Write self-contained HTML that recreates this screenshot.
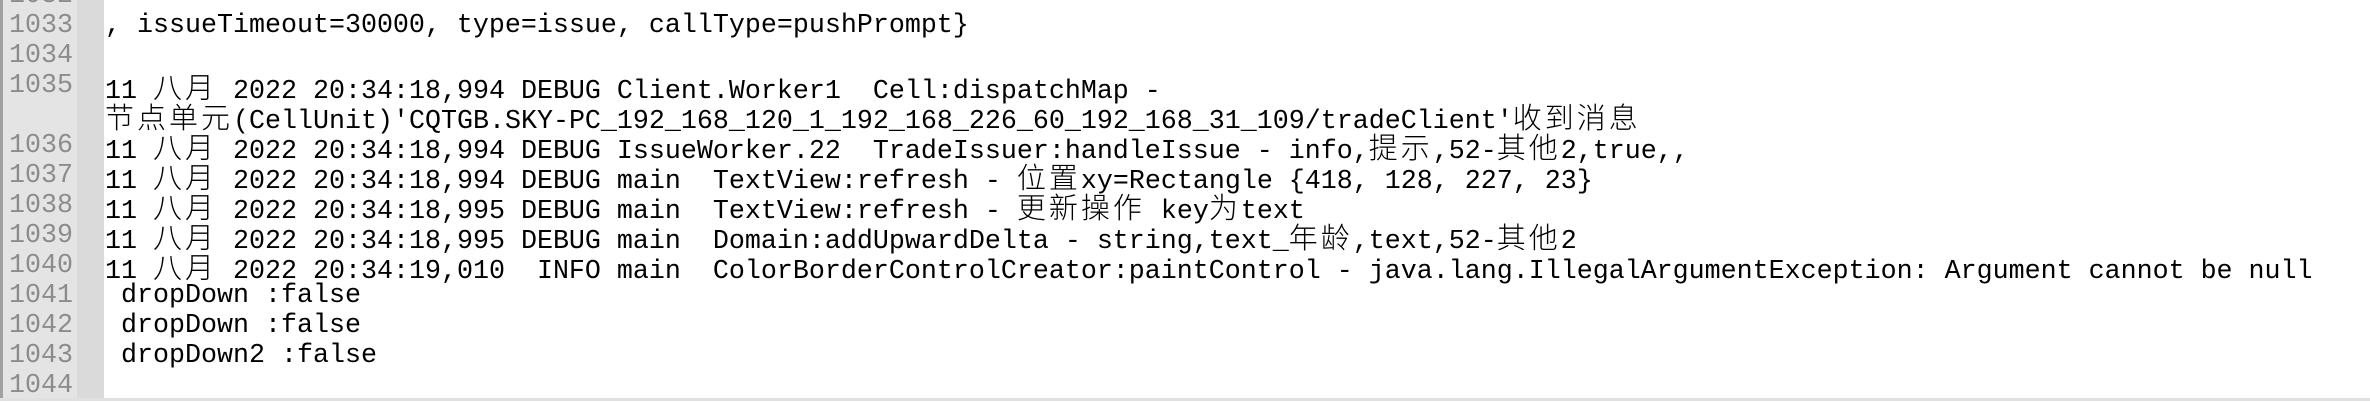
<!DOCTYPE html>
<html><head><meta charset="utf-8"><style>
html,body{margin:0;padding:0;width:2370px;height:402px;overflow:hidden;background:#fff;position:relative}
.gut{position:absolute;left:0;top:0;width:104px;height:399px;background:#e4e4e4}
.gut2{position:absolute;left:77px;top:0;width:27px;height:399px;background:#dadada}
.lb{position:absolute;left:0;top:0;width:3px;height:399px;background:#a0a0a0}
.bb{position:absolute;left:0;top:398px;width:2370px;height:3px;background:#e0e0e0}
.r{position:absolute;height:30px;line-height:30px;font-family:"Liberation Mono","Noto Sans CJK SC",monospace;font-size:26.67px;white-space:pre}
.n{left:9px;color:#8c8c8c}
.t{left:105px;color:#000}
.c{font-family:"Noto Sans CJK SC",sans-serif;font-size:29px;letter-spacing:3px;font-weight:300}
</style></head><body>
<div class="gut"></div><div class="gut2"></div><div class="lb"></div><div class="bb"></div>
<div class="r n" style="top:-19px">1032</div>
<div class="r n" style="top:11px">1033</div>
<div class="r n" style="top:41px">1034</div>
<div class="r n" style="top:71px">1035</div>
<div class="r n" style="top:131px">1036</div>
<div class="r n" style="top:161px">1037</div>
<div class="r n" style="top:191px">1038</div>
<div class="r n" style="top:221px">1039</div>
<div class="r n" style="top:251px">1040</div>
<div class="r n" style="top:281px">1041</div>
<div class="r n" style="top:311px">1042</div>
<div class="r n" style="top:341px">1043</div>
<div class="r n" style="top:371px">1044</div>
<div class="r t" style="top:11px">, issueTimeout=30000, type=issue, callType=pushPrompt}</div>
<div class="r t" style="top:71px">11 <span class="c">八月</span> 2022 20:34:18,994 DEBUG Client.Worker1  Cell:dispatchMap - </div>
<div class="r t" style="top:101px"><span class="c">节点单元</span>(CellUnit)'CQTGB.SKY-PC_192_168_120_1_192_168_226_60_192_168_31_109/tradeClient'<span class="c">收到消息</span></div>
<div class="r t" style="top:131px">11 <span class="c">八月</span> 2022 20:34:18,994 DEBUG IssueWorker.22  TradeIssuer:handleIssue - info,<span class="c">提示</span>,52-<span class="c">其他</span>2,true,,</div>
<div class="r t" style="top:161px">11 <span class="c">八月</span> 2022 20:34:18,994 DEBUG main  TextView:refresh - <span class="c">位置</span>xy=Rectangle {418, 128, 227, 23}</div>
<div class="r t" style="top:191px">11 <span class="c">八月</span> 2022 20:34:18,995 DEBUG main  TextView:refresh - <span class="c">更新操作</span> key<span class="c">为</span>text</div>
<div class="r t" style="top:221px">11 <span class="c">八月</span> 2022 20:34:18,995 DEBUG main  Domain:addUpwardDelta - string,text_<span class="c">年龄</span>,text,52-<span class="c">其他</span>2</div>
<div class="r t" style="top:251px">11 <span class="c">八月</span> 2022 20:34:19,010  INFO main  ColorBorderControlCreator:paintControl - java.lang.IllegalArgumentException: Argument cannot be null</div>
<div class="r t" style="top:281px"> dropDown :false</div>
<div class="r t" style="top:311px"> dropDown :false</div>
<div class="r t" style="top:341px"> dropDown2 :false</div>
</body></html>
